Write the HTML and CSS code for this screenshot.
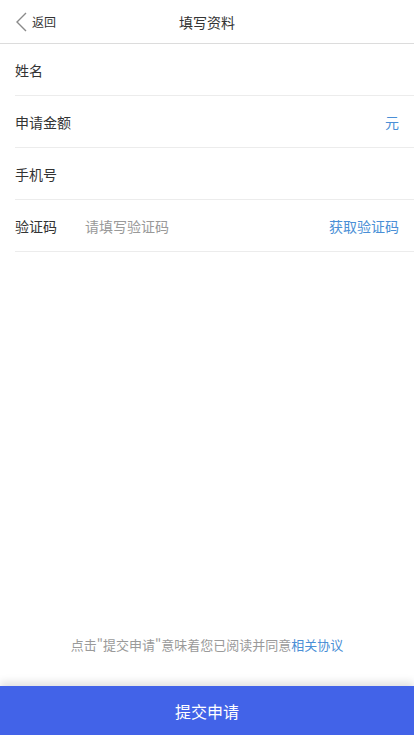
FILE: index.html
```html
<!DOCTYPE html>
<html lang="zh-CN">
<head>
<meta charset="utf-8">
<meta name="viewport" content="width=device-width, initial-scale=1">
<title>填写资料</title>
<link rel="stylesheet" href="styles.css">
</head>
<body>
<div class="page">
  <header class="header">
    <div class="back">
      <svg class="chevron" width="12" height="20" viewBox="0 0 12 20"><path d="M11 1 L2 10 L11 19" fill="none" stroke="#8a8a8a" stroke-width="1.4"/></svg>
      <span class="back-text">返回</span>
    </div>
    <div class="title">填写资料</div>
  </header>
  <main class="form">
    <div class="row"><span class="label">姓名</span></div>
    <div class="row"><span class="label">申请金额</span><span class="spacer"></span><span class="link">元</span></div>
    <div class="row"><span class="label">手机号</span></div>
    <div class="row"><span class="label">验证码</span><span class="placeholder">请填写验证码</span><span class="spacer"></span><span class="link">获取验证码</span></div>
  </main>
  <p class="note">点击"提交申请"意味着您已阅读并同意<span class="note-link">相关协议</span></p>
  <div class="submit">提交申请</div>
</div>
</body>
</html>
```
FILE: styles.css
```css
html, body {
  margin: 0;
  padding: 0;
  background: #fff;
}
body {
  font-family: "Noto Sans CJK SC", "Noto Sans", sans-serif;
  color: #333;
}
.page {
  display: flex;
  flex-direction: column;
  height: 735px;
}
.header {
  position: relative;
  height: 43px;
  border-bottom: 1px solid #dcdcdc;
  display: flex;
  align-items: center;
  justify-content: center;
}
.back {
  position: absolute;
  left: 15px;
  top: 12px;
  display: flex;
  align-items: center;
  gap: 5px;
}
.chevron {
  display: block;
}
.back-text {
  font-size: 12px;
  line-height: 20px;
  color: #333;
}
.title {
  font-size: 14px;
  line-height: 20px;
  color: #333;
}
.form {
  flex: 1;
  padding-left: 15px;
}
.row {
  height: 51px;
  border-bottom: 1px solid #ececec;
  display: flex;
  align-items: center;
  padding-right: 15px;
  font-size: 14px;
}
.label {
  color: #333;
  width: 70px;
}
.placeholder {
  color: #999;
}
.spacer {
  flex: 1;
}
.link {
  color: #4a8fd6;
}
.note {
  margin: 0 0 31px;
  text-align: center;
  font-size: 13px;
  line-height: 20px;
  color: #9a9a9a;
}
.note-link {
  color: #4a8fd6;
}
.submit {
  height: 49px;
  background: #4263e8;
  color: #fff;
  font-size: 16px;
  display: flex;
  align-items: center;
  justify-content: center;
  box-shadow: 0 -4px 8px rgba(0, 0, 0, 0.12);
}
```
